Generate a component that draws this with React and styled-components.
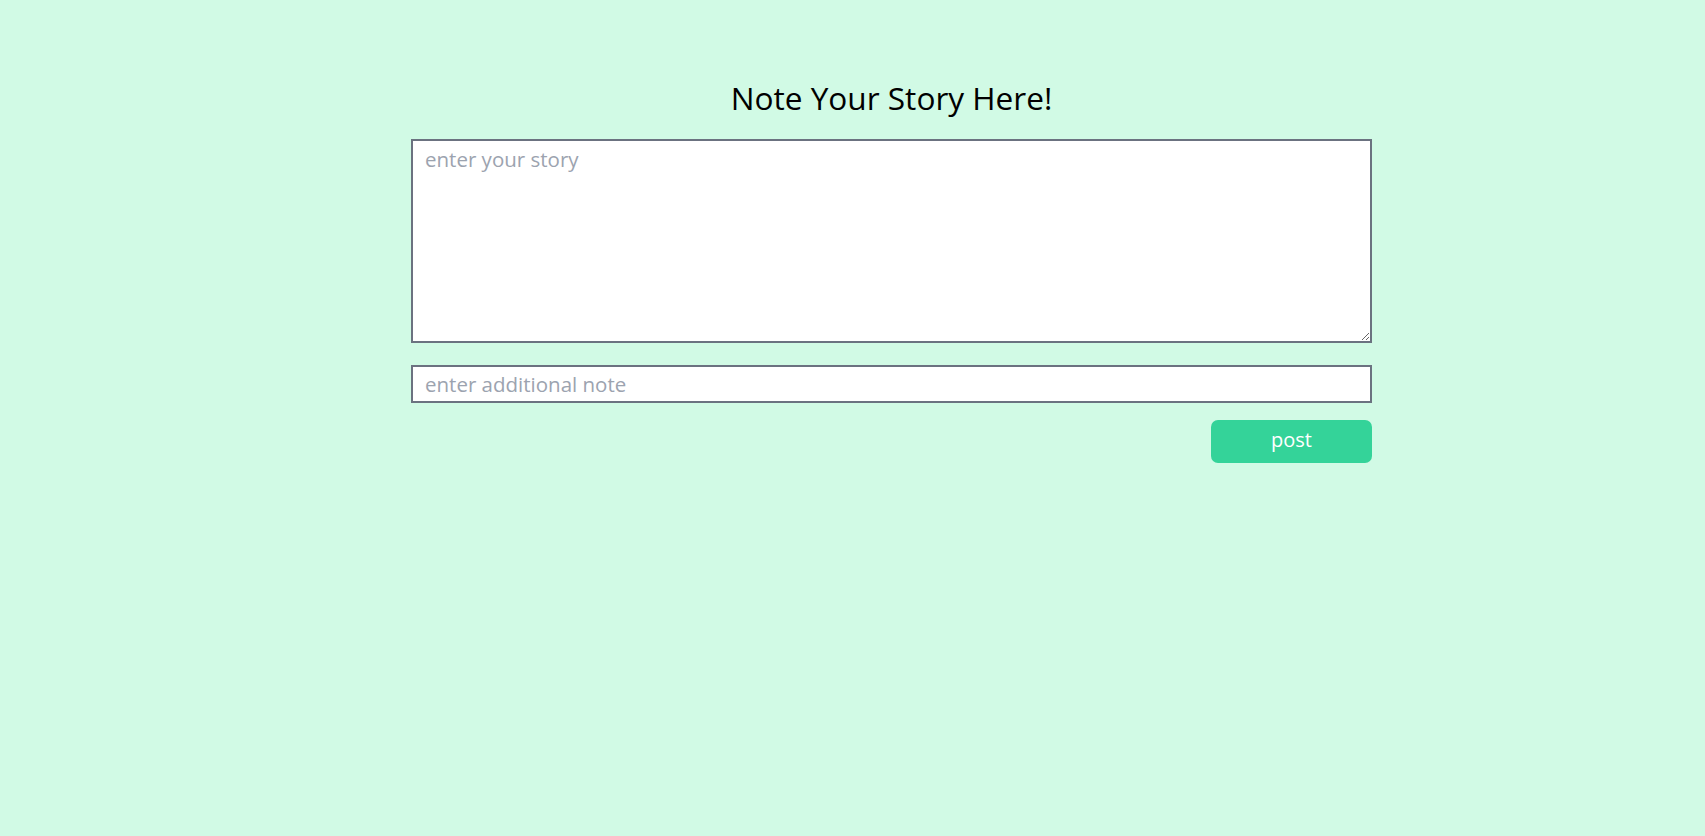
import React, { useState } from 'react';
import styled, { createGlobalStyle } from 'styled-components';

const GlobalStyle = createGlobalStyle`
  html, body {
    margin: 0;
    padding: 0;
    background: #d1fae5;
    font-family: "Open Sans", "Noto Sans", sans-serif;
  }
`;

const Page = styled.main`
  min-height: 836px;
  padding: 76px 0 0 78px;
  box-sizing: border-box;
  background: #d1fae5;
`;

const Form = styled.form`
  width: 961px;
  margin: 0 auto;
  display: flex;
  flex-direction: column;
`;

const Title = styled.h1`
  margin: 0 0 19px;
  font-size: 31.6px;
  line-height: 44px;
  font-weight: 400;
  text-align: center;
  color: #000;
`;

const field = `
  box-sizing: border-box;
  width: 100%;
  border: 2px solid #6b7280;
  background: #fff;
  font-family: "Open Sans", "Noto Sans", sans-serif;
  font-size: 20.5px;
  color: #111827;
  outline: none;
  &::placeholder {
    color: #9ca3af;
  }
`;

const StoryArea = styled.textarea`
  ${field}
  height: 204px;
  padding: 4px 12px;
  resize: vertical;
  display: block;
`;

const NoteInput = styled.input`
  ${field}
  height: 38px;
  margin-top: 22px;
  padding: 0 12px;
`;

const Actions = styled.div`
  display: flex;
  justify-content: flex-end;
  margin-top: 17px;
`;

const PostButton = styled.button`
  width: 161px;
  height: 43px;
  border: none;
  border-radius: 7px;
  background: #34d399;
  color: #fff;
  font-family: "Open Sans", "Noto Sans", sans-serif;
  font-size: 20px;
  line-height: 1;
  padding: 0 0 3px;
  cursor: pointer;
`;

export default function App() {
  const [story, setStory] = useState('');
  const [note, setNote] = useState('');

  return (
    <>
      <GlobalStyle />
      <Page>
        <Form onSubmit={(e) => e.preventDefault()}>
          <Title>Note Your Story Here!</Title>
          <StoryArea
            placeholder="enter your story"
            value={story}
            onChange={(e) => setStory(e.target.value)}
          />
          <NoteInput
            placeholder="enter additional note"
            value={note}
            onChange={(e) => setNote(e.target.value)}
          />
          <Actions>
            <PostButton type="submit">post</PostButton>
          </Actions>
        </Form>
      </Page>
    </>
  );
}
